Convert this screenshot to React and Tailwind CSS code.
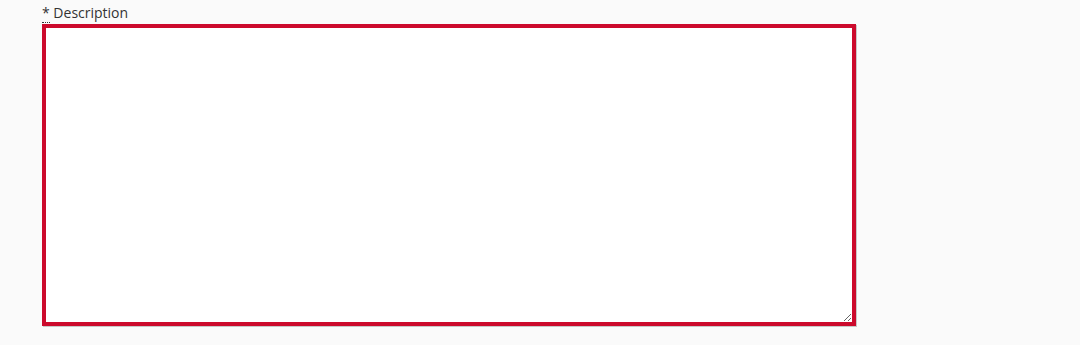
import React from 'react';

const App = () => {
    return (
        <div className="min-h-screen bg-[#fafafa] px-[42px] pt-[3px]" style={{ fontFamily: '"Open Sans", sans-serif' }}>
            <label htmlFor="description" className="block text-[14px] leading-[20px] text-[#333]">
                <abbr title="required" className="no-underline border-b border-dotted border-[#333]">*</abbr> Description
            </label>
            <textarea
                id="description"
                className="block mt-px w-[814px] h-[302px] bg-white border-4 border-[#cc0a2c] shadow-[1px_1px_0_#c8c8c8] outline-none resize-y"
            />
        </div>
    );
};

export default App;
